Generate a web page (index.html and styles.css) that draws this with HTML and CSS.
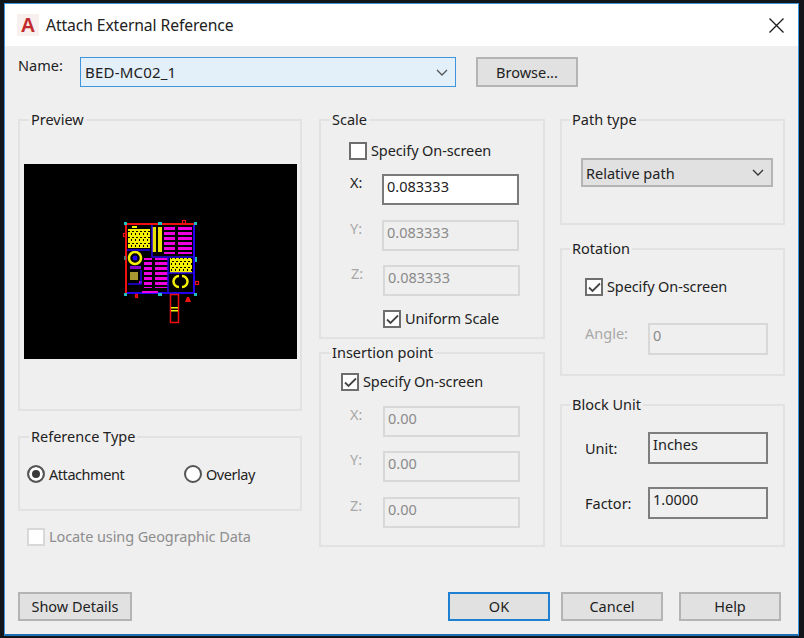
FILE: index.html
```html
<!DOCTYPE html>
<html>
<head>
<meta name="viewport" content="width=device-width, initial-scale=1">
<title>Attach External Reference</title>
<link rel="stylesheet" href="styles.css">
</head>
<body>

<div class="window">
  <div class="titlebar">
    <span class="logo">A</span>
    <span class="title">Attach External Reference</span>
    <svg class="close" width="15" height="15" viewBox="0 0 15 15"><path d="M0.5 0.5L14.5 14.5M14.5 0.5L0.5 14.5" stroke="#1a1a1a" stroke-width="1.3" fill="none"/></svg>
  </div>

  <div class="content">
    <div class="name-row">
      <span class="name-label">Name:</span>
      <div class="combo combo-name">
        <span class="name-value">BED-MC02_1</span>
        <svg width="12" height="7" viewBox="0 0 12 7"><path d="M1 1L6 6L11 1" stroke="#555" stroke-width="1.3" fill="none"/></svg>
      </div>
      <div class="btn btn-browse">Browse...</div>
    </div>

    <div class="columns">
      <div class="col">
        <fieldset class="group preview-group">
          <legend>Preview</legend>
          <div class="group-body">
            <svg class="preview" width="273" height="195" viewBox="24 164 273 195">
              <defs>
                <pattern id="mag" width="6" height="5" patternUnits="userSpaceOnUse" x="0" y="227"><rect width="6" height="3" fill="#f000e0"/></pattern>
                <pattern id="yel" width="4" height="6" patternUnits="userSpaceOnUse" x="128" y="229"><rect width="4" height="6" fill="#f4f000"/><rect y="2" width="2" height="1" fill="#000"/><rect x="3" y="4" width="1" height="2" fill="#000"/></pattern>
              </defs>
              <rect x="24" y="164" width="273" height="195" fill="#000"/>
              <rect x="128" y="229" width="22" height="19" fill="url(#yel)"/>
              <rect x="152" y="227" width="4" height="25" fill="#e8e000"/>
              <rect x="158" y="227" width="4" height="25" fill="#e8e000"/>
              <rect x="164" y="227" width="11" height="27" fill="url(#mag)"/>
              <rect x="178" y="227" width="14" height="27" fill="url(#mag)"/>
              <rect x="144" y="258" width="8" height="30" fill="url(#mag)"/>
              <rect x="155" y="258" width="13" height="30" fill="url(#mag)"/>
              <rect x="170" y="258" width="22" height="15" fill="url(#yel)"/>
              <circle cx="135" cy="258" r="6" fill="none" stroke="#f4f000" stroke-width="2.500"/>
              <circle cx="135" cy="258" r="2.500" fill="#2200ee"/>
              <rect x="130" y="266" width="11" height="3" fill="#8800cc"/>
              <rect x="130" y="272" width="8" height="8" fill="#a89a30"/>
              <rect x="139" y="281" width="3" height="3" fill="#e000c0"/>
              <path d="M179 276a5 5 0 0 0 0 11M182 276a5 5 0 0 1 0 11" fill="none" stroke="#f4f000" stroke-width="2.500"/>
              <path d="M152 225V257H194M168 257V293M168 273H194M126 250H150M141 270V284H128" fill="none" stroke="#2200ee" stroke-width="1.500"/>
              <path d="M194 224V293H126" fill="none" stroke="#2200ee" stroke-width="2"/>
              <path d="M126 293V224H194" fill="none" stroke="#f01010" stroke-width="2"/>
              <rect x="170.500" y="294.500" width="8" height="28" fill="none" stroke="#f01010" stroke-width="1.500"/>
              <rect x="171" y="307" width="7" height="1.500" fill="#f4f000"/>
              <rect x="171" y="310" width="7" height="1.500" fill="#f4f000"/>
              <path d="M185 302L187 297H189L191 302Z" fill="#f01010"/>
              <rect x="142" y="291" width="16" height="2" fill="#f000e0"/>
              <g fill="#20c0c0">
                <rect x="124" y="222" width="3" height="3"/><rect x="158" y="222" width="4" height="3"/><rect x="194" y="222" width="3" height="3"/>
                <rect x="124" y="293" width="3" height="3"/><rect x="158" y="293" width="4" height="3"/><rect x="194" y="293" width="3" height="3"/>
                <rect x="195" y="257" width="2" height="5"/><rect x="124" y="256" width="2" height="4" fill="#607070"/>
              </g>
              <g fill="none" stroke="#f01010" stroke-width="1.200">
                <rect x="182.500" y="220.500" width="3" height="3"/><rect x="123.500" y="233.500" width="3" height="3"/>
                <rect x="195.500" y="281.500" width="3" height="3"/><rect x="135.500" y="294.500" width="2" height="3"/>
              </g>
              <rect x="132" y="226" width="5" height="2" fill="#f4f000"/>
            </svg>
          </div>
        </fieldset>

        <fieldset class="group type-group">
          <legend>Reference Type</legend>
          <div class="group-body radios">
            <label class="radio-item radio-first"><span class="radio on"></span>Attachment</label>
            <label class="radio-item"><span class="radio"></span>Overlay</label>
          </div>
        </fieldset>

        <label class="check-row locate off"><span class="box"></span>Locate using Geographic Data</label>
      </div>

      <div class="col">
        <fieldset class="group scale-group">
          <legend>Scale</legend>
          <div class="group-body">
            <label class="check-row"><span class="box"></span>Specify On-screen</label>
            <div class="coord scale-first"><span class="coord-label">X:</span><div class="field live">0.083333</div></div>
            <div class="coord off"><span class="coord-label">Y:</span><div class="field">0.083333</div></div>
            <div class="coord off tight"><span class="coord-label nudge">Z:</span><div class="field nudge-field">0.083333</div></div>
            <label class="check-row uniform"><span class="box"><svg width="13" height="11" viewBox="0 0 13 11"><path d="M1 5.500L4.500 9L12 1.500" stroke="#444" stroke-width="1.800" fill="none"/></svg></span>Uniform Scale</label>
          </div>
        </fieldset>

        <fieldset class="group insert-group">
          <legend>Insertion point</legend>
          <div class="group-body">
            <label class="check-row"><span class="box"><svg width="13" height="11" viewBox="0 0 13 11"><path d="M1 5.500L4.500 9L12 1.500" stroke="#444" stroke-width="1.800" fill="none"/></svg></span>Specify On-screen</label>
            <div class="coord off insert-first"><span class="coord-label">X:</span><div class="field">0.00</div></div>
            <div class="coord off tight"><span class="coord-label">Y:</span><div class="field">0.00</div></div>
            <div class="coord off"><span class="coord-label">Z:</span><div class="field">0.00</div></div>
          </div>
        </fieldset>
      </div>

      <div class="col">
        <fieldset class="group path-group">
          <legend>Path type</legend>
          <div class="group-body">
            <div class="combo combo-path">
              <span>Relative path</span>
              <svg width="12" height="7" viewBox="0 0 12 7"><path d="M1 1L6 6L11 1" stroke="#333" stroke-width="1.300" fill="none"/></svg>
            </div>
          </div>
        </fieldset>

        <fieldset class="group rotation-group">
          <legend>Rotation</legend>
          <div class="group-body">
            <label class="check-row"><span class="box"><svg width="13" height="11" viewBox="0 0 13 11"><path d="M1 5.500L4.500 9L12 1.500" stroke="#444" stroke-width="1.800" fill="none"/></svg></span>Specify On-screen</label>
            <div class="prop off angle"><span class="prop-label">Angle:</span><div class="field wide">0</div></div>
          </div>
        </fieldset>

        <fieldset class="group unit-group">
          <legend>Block Unit</legend>
          <div class="group-body">
            <div class="prop"><span class="prop-label">Unit:</span><div class="field wide readonly">Inches</div></div>
            <div class="prop factor"><span class="prop-label">Factor:</span><div class="field wide readonly">1.0000</div></div>
          </div>
        </fieldset>
      </div>
    </div>

    <div class="footer">
      <div class="btn btn-details">Show Details</div>
      <div class="btn btn-ok">OK</div>
      <div class="btn btn-cancel">Cancel</div>
      <div class="btn btn-help">Help</div>
    </div>
  </div>
</div>

</body>
</html>
```

FILE: styles.css
```css
* {box-sizing: border-box;}

html, body {
  margin: 0;
  height: 638px;
  overflow: hidden;
}

body {
  background-color: #12151a;
  font-family: "Noto Sans", Arial, sans-serif;
  font-size: 14.5px;
  color: #222;
  padding: 3px 5px 2px 4px;
}

.window {
  height: 633px;
  border: 1px solid #3f95dc;
  border-bottom: 2px solid #1e6fb4;
  background-color: #efefef;
}

.titlebar {
  height: 42px;
  background-color: #fff;
  display: flex;
  align-items: center;
  padding-left: 12px;
  padding-right: 14px;
}

.logo {
  width: 22px;
  height: 22px;
  background-color: #f8f0ee;
  color: #c22a2c;
  font-family: "Liberation Sans", Arial, sans-serif;
  font-weight: bold;
  font-size: 20px;
  line-height: 22px;
  text-align: center;
}

.title {
  margin-left: 7px;
  font-size: 15.7px;
  letter-spacing: -0.1px;
}

.close {
  margin-left: auto;
}

.content {
  padding: 11px 0 0 13px;
}

.name-row {
  display: flex;
  align-items: flex-start;
  height: 30px;
}

.name-label {
  width: 62px;
  line-height: 18px;
  margin-top: -1px;
}

.combo {
  display: flex;
  align-items: center;
  justify-content: space-between;
}

.combo-name {
  width: 376px;
  height: 30px;
  border: 1px solid #3f95dc;
  background-color: #e3eff9;
  padding: 0 7px 0 4px;
}

.name-value {
  font-size: 15px;
  letter-spacing: 0.2px;
}

.btn {
  height: 30px;
  line-height: 26px;
  border: 2px solid #b4b4b4;
  background-color: #e1e1e1;
  text-align: center;
}

.btn-browse {
  width: 102px;
  margin-left: 20px;
}

.columns {
  display: flex;
  margin-top: 23px;
}

.col {
  display: flex;
  flex-direction: column;
}

.col:nth-child(1) {width: 284px;}
.col:nth-child(2) {width: 226px; margin-left: 17px;}
.col:nth-child(3) {width: 225px; margin-left: 15px;}

.group {
  margin: 0;
  padding: 0;
  min-width: 0;
  border: 2px solid #e2e2e2;
}

.group legend {
  margin-left: 9px;
  padding: 0 2px 1px;
  line-height: 19px;
}

.col:nth-child(3) .group legend {margin-left: 8px;}

.preview-group {height: 301px;}
.preview-group .group-body {padding: 34px 0 0 4px;}
.preview {display: block;}

.type-group {height: 84px; margin-top: 16px;}
.type-group .group-body {padding: 17px 0 0 7px;}

.radios {display: flex;}

.radio-item {
  display: flex;
  align-items: center;
  gap: 4px;
  letter-spacing: -0.45px;
  line-height: 20px;
}

.radio-first {width: 157px;}

.radio {
  width: 18px;
  height: 18px;
  border: 2px solid #555;
  border-radius: 50%;
  background-color: #fff;
}

.radio.on {
  background-color: #3a3a3a;
  box-shadow: inset 0 0 0 3px #fff;
}

.check-row {
  display: flex;
  align-items: flex-start;
  height: 17px;
  gap: 4px;
  line-height: 17px;
  letter-spacing: -0.1px;
}

.box {
  width: 18px;
  height: 18px;
  flex: none;
  border: 2px solid #6e6e6e;
  background-color: #fff;
  display: flex;
  align-items: center;
  justify-content: center;
}

.locate {
  margin: 17px 0 0 9px;
  color: #8d8d8d;
}

.locate .box {border-color: #d8d8d8;}

.scale-group {height: 229px;}
.scale-group .group-body {padding: 12px 0 0 28px;}
.insert-group {height: 204px; margin-top: 4px;}
.insert-group .group-body {padding: 10px 0 0 20px;}

.coord {
  display: flex;
  align-items: flex-start;
  margin-top: 15px;
}

.coord.tight {margin-top: 14px;}

.coord-label {
  width: 33px;
  padding-left: 1px;
  line-height: 16px;
}

.insert-group .coord {margin-left: 8px;}
.insert-group .coord-label {width: 34px;}
.insert-group .insert-first {margin-top: 16px;}
.nudge {padding-left: 2px;}
.nudge-field {margin-left: 1px;}

.field {
  width: 137px;
  height: 31px;
  border: 2px solid #d8d8d8;
  background-color: #efefef;
  padding-left: 3px;
  line-height: 20px;
  color: #8a8a8a;
}

.field.live {
  border-color: #7a7a7a;
  background-color: #fff;
  color: #222;
}

.field.wide {
  width: 120px;
  height: 32px;
  padding-left: 3px;
}

.field.readonly {
  border-color: #7e7e7e;
  background-color: #f0f0f0;
  color: #222;
}

.off .coord-label,
.off .prop-label {color: #a8a8a8;}

.uniform {margin: 14px 0 0 34px;}

.path-group {height: 115px;}
.path-group .group-body {padding: 28px 0 0 19px;}

.combo-path {
  width: 192px;
  height: 29px;
  background-color: #e1e1e1;
  border: 2px solid #b4b4b4;
  padding: 0 7px 0 3px;
}

.rotation-group {height: 137px; margin-top: 14px;}
.rotation-group .group-body {padding: 19px 0 0 23px;}
.unit-group {height: 152px; margin-top: 19px;}
.unit-group .group-body {padding: 17px 0 0 23px;}

.prop {
  display: flex;
  align-items: center;
}

.prop-label {width: 63px;}
.angle .prop-label {margin-top: -12px;}
.angle {margin-top: 28px;}
.factor {margin-top: 23px;}

.footer {
  display: flex;
  margin-top: 45px;
}

.footer .btn {height: 29px; line-height: 24px;}
.btn-details {width: 114px;}
.btn-ok {
  width: 102px;
  margin-left: 316px;
  border-color: #1f7fd0;
}
.btn-cancel {width: 102px; margin-left: 11px;}
.btn-help {width: 102px; margin-left: 16px;}
```
